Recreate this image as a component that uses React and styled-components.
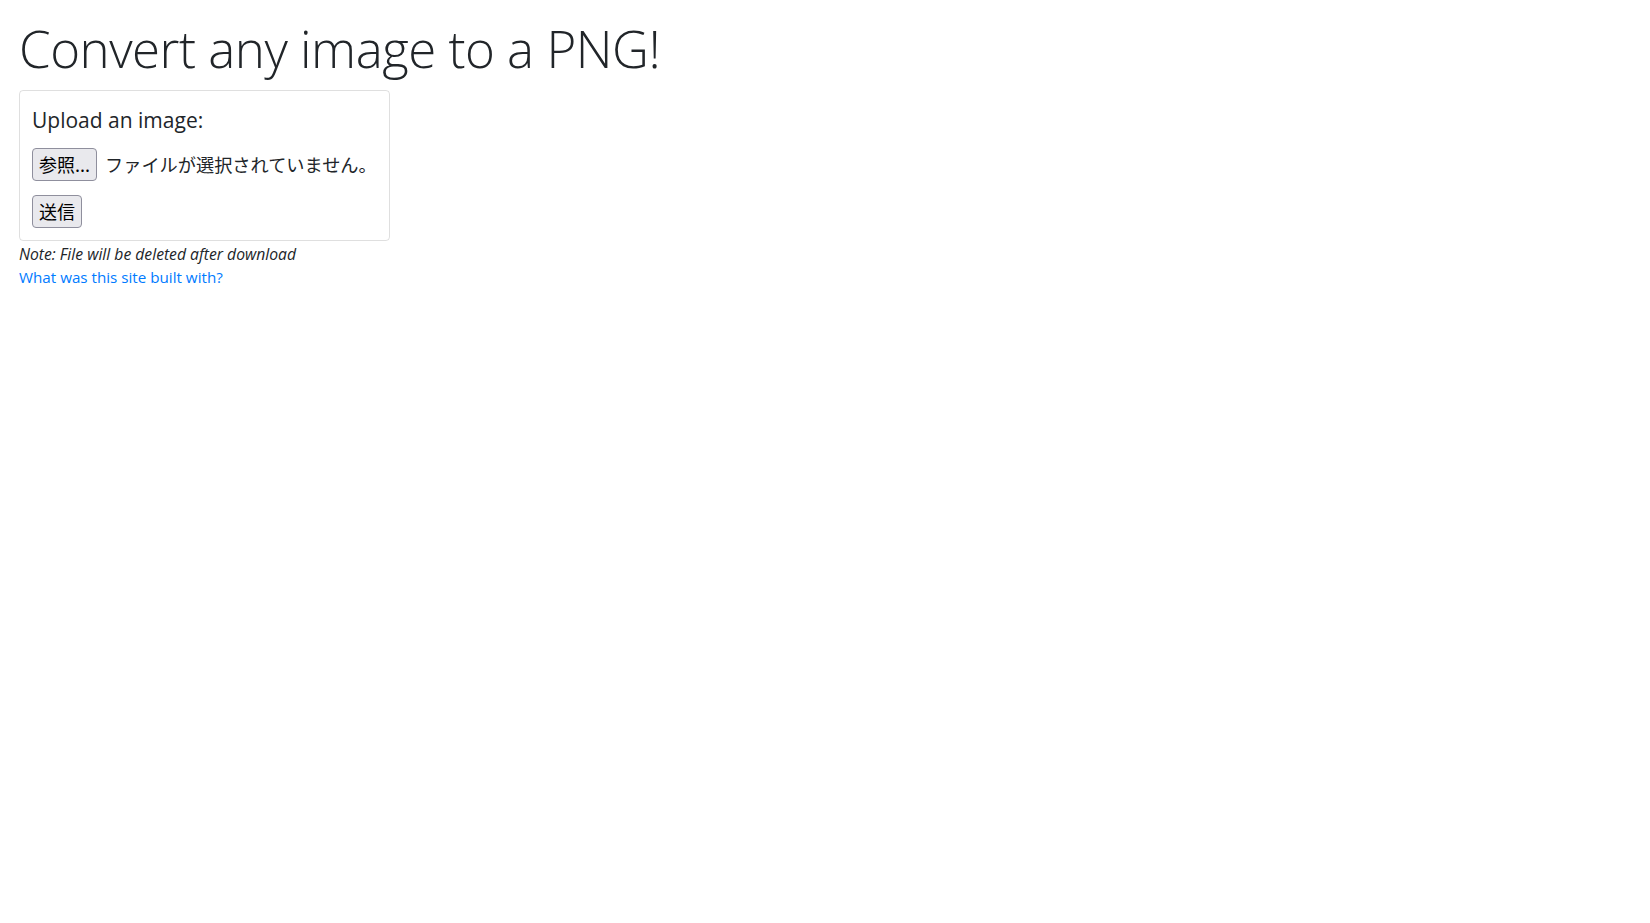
import React from "react";
import styled, { createGlobalStyle } from "styled-components";

const GlobalStyle = createGlobalStyle`
  html, body {
    margin: 0;
    padding: 0;
    background: #fff;
  }
  body {
    font-family: "Open Sans", "Noto Sans", "Noto Sans CJK JP", sans-serif;
    color: #212529;
    font-size: 16px;
    line-height: 1.5;
  }
`;

const Page = styled.main`
  padding: 18px 19px;
`;

const Title = styled.h1`
  margin: 0 0 11px;
  font-size: 51px;
  font-weight: 300;
  line-height: 1.2;
  letter-spacing: -0.5px;
`;

const Card = styled.form`
  display: inline-flex;
  flex-direction: column;
  align-items: flex-start;
  border: 1px solid rgba(0, 0, 0, 0.125);
  border-radius: 4px;
  padding: 13px 12px 12px;
`;

const Label = styled.label`
  font-size: 21px;
  line-height: 33px;
  margin-bottom: 11px;
`;

const FileRow = styled.div`
  display: flex;
  align-items: center;
  gap: 8px;
  margin-bottom: 14px;
  font-family: "Noto Sans CJK JP", sans-serif;
  font-size: 18.2px;
`;

const NativeButton = styled.button`
  font-family: "Noto Sans CJK JP", sans-serif;
  font-size: 18px;
  line-height: 27px;
  padding: 2px 6px;
  color: #000;
  background: #e9e9ed;
  border: 1px solid #8f8f9d;
  border-radius: 4px;
`;

const Note = styled.div`
  font-style: italic;
  font-size: 15.7px;
  line-height: 24px;
  margin-top: 1px;
`;

const Link = styled.a`
  display: block;
  color: #007bff;
  font-size: 15.2px;
  line-height: 23px;
  text-decoration: none;
`;

export default function App() {
  return (
    <>
      <GlobalStyle />
      <Page>
        <Title>Convert any image to a PNG!</Title>
        <Card onSubmit={(e) => e.preventDefault()}>
          <Label>Upload an image:</Label>
          <FileRow>
            <NativeButton type="button">参照...</NativeButton>
            <span>ファイルが選択されていません。</span>
          </FileRow>
          <NativeButton type="submit">送信</NativeButton>
        </Card>
        <Note>Note: File will be deleted after download</Note>
        <Link href="#">What was this site built with?</Link>
      </Page>
    </>
  );
}
